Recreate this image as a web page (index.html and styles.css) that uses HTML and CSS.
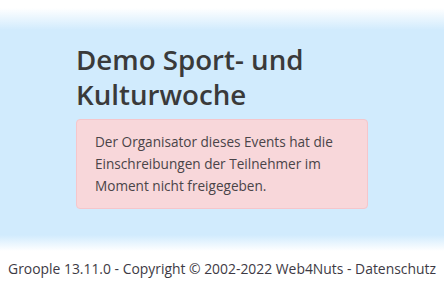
FILE: index.html
```html
<!DOCTYPE html>
<html lang="de">
<head>
  <meta charset="UTF-8">
  <meta name="viewport" content="width=device-width, initial-scale=1">
  <title>Demo Sport- und Kulturwoche</title>
  <link rel="stylesheet" href="styles.css">
</head>
<body>

<main class="stage">
  <div class="content">
    <h1 class="event-title">Demo Sport- und Kulturwoche</h1>
    <div class="alert">
      Der Organisator dieses Events hat die Einschreibungen der Teilnehmer im Moment nicht freigegeben.
    </div>
  </div>
</main>

<footer class="site-footer">
  Groople 13.11.0 - Copyright © 2002-2022 Web4Nuts - Datenschutz
</footer>

</body>
</html>
```
FILE: styles.css
```css
body {
  font-family: 'Open Sans', sans-serif;
  background: white;
  color: #333;
  margin: 0;
  padding: 0;
}

.stage {
  background: linear-gradient(to bottom, white 8px, #d1ebfd 30px, #d1ebfd calc(100% - 16px), white 100%);
  padding: 42px 0 42px;
}

.content {
  width: 292px;
  margin: 0 auto;
}

.event-title {
  font-size: 27.7px;
  font-weight: 600;
  line-height: 35px;
  color: #3a3a3a;
  margin: 0 0 7px;
}

.alert {
  background-color: #f8d7da;
  border: 1px solid #f5c6cb;
  border-radius: 4px;
  padding: 11px 20px 11px 18px;
  font-size: 13.6px;
  line-height: 22px;
  color: #4a4448;
}

.site-footer {
  text-align: center;
  font-size: 13.9px;
  color: #3d3a44;
  padding: 8px 0;
}
```
